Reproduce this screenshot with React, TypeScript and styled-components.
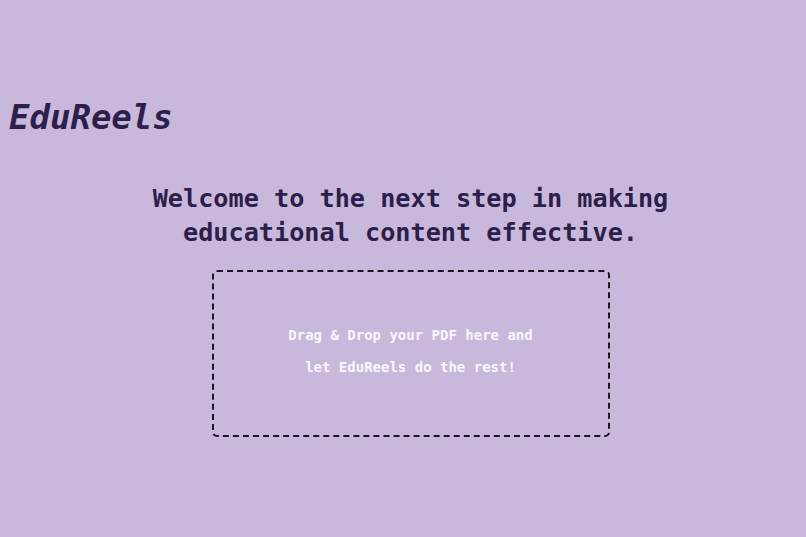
import React from "react";
import styled, { createGlobalStyle } from "styled-components";

const Global = createGlobalStyle`
  html, body { margin: 0; padding: 0; }
  body {
    background: #c8b9dc;
    font-family: "DejaVu Sans Mono", "Liberation Mono", monospace;
  }
`;

const Page = styled.div`
  min-height: 537px;
  background: #c8b9dc;
  display: flex;
  flex-direction: column;
  box-sizing: border-box;
  padding-top: 97px;
`;

const Logo = styled.div`
  padding-left: 9px;
  font-size: 34px;
  line-height: 40px;
  font-style: italic;
  font-weight: bold;
  color: #2d1e4b;
`;

const Main = styled.main`
  display: flex;
  flex-direction: column;
  align-items: center;
  padding-left: 15px;
  margin-top: 45px;
`;

const Heading = styled.h1`
  margin: 0;
  font-size: 25.2px;
  line-height: 34px;
  font-weight: bold;
  text-align: center;
  color: #2d1e4b;
`;

const DropZone = styled.div`
  margin-top: 20px;
  width: 398px;
  height: 167px;
  box-sizing: border-box;
  border: 2.5px dashed #1b1524;
  border-radius: 5px;
  padding-bottom: 6px;
  display: flex;
  flex-direction: column;
  align-items: center;
  justify-content: center;
  color: #faf7fc;
  font-size: 14px;
  font-weight: bold;
  line-height: 32px;
  text-align: center;
`;

export default function App() {
  return (
    <>
      <Global />
      <Page>
        <Logo>EduReels</Logo>
        <Main>
          <Heading>
            Welcome to the next step in making
            <br />
            educational content effective.
          </Heading>
          <DropZone>
            <div>Drag &amp; Drop your PDF here and</div>
            <div>let EduReels do the rest!</div>
          </DropZone>
        </Main>
      </Page>
    </>
  );
}
